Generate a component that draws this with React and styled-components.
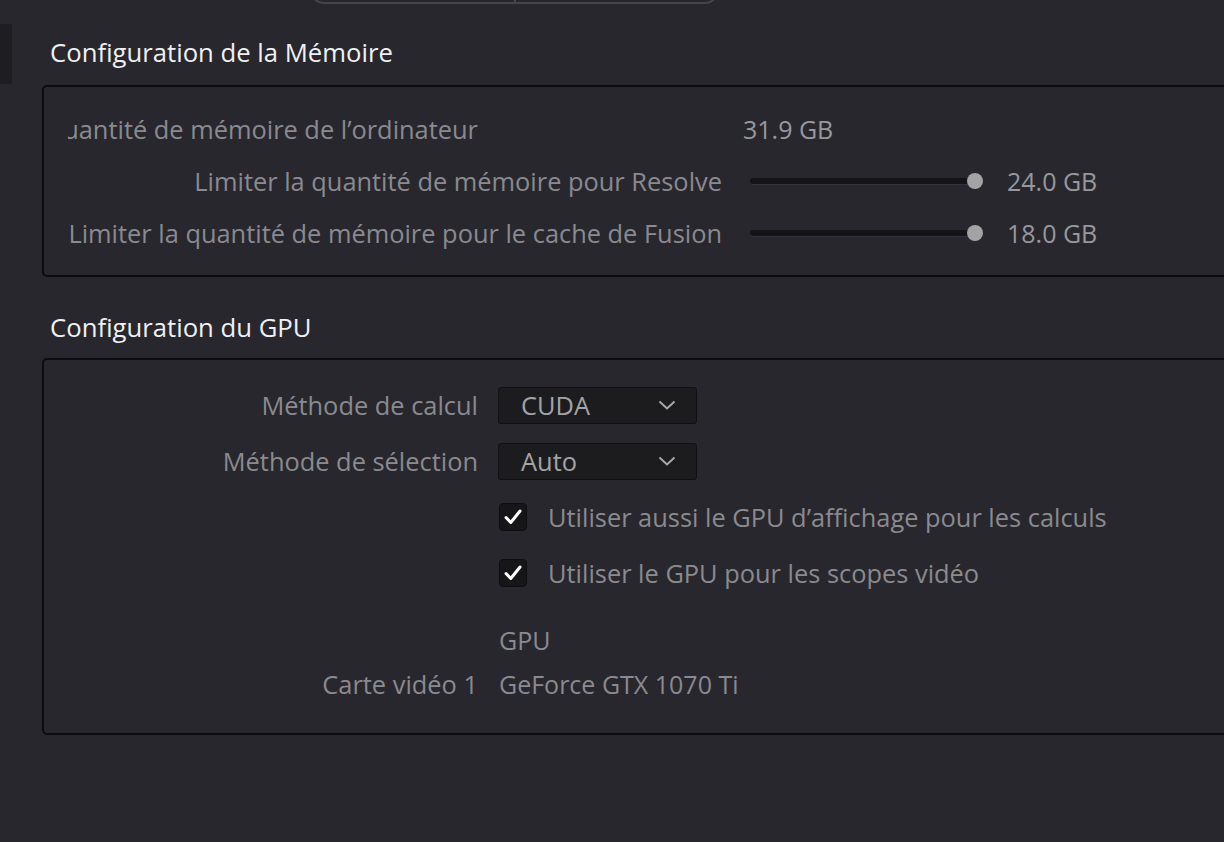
import React from 'react'
import styled, { createGlobalStyle } from 'styled-components'

const GlobalStyle = createGlobalStyle`
  html, body {
    margin: 0;
    padding: 0;
    background: #28272d;
    overflow: hidden;
  }
  body {
    font-family: "Open Sans", "Noto Sans", "DejaVu Sans", sans-serif;
  }
`;

const Page = styled.div`
    position: relative;
    width: 1224px;
    height: 842px;
    overflow: hidden;
    background: #28272d;
`;

const TopTabs = styled.div`
    display: flex;
    margin-left: 310px;
    margin-top: -28px;
    width: 405px;
    height: 28px;
    border: 2px solid #45444c;
    border-radius: 0 0 14px 14px;
`;

const TopTab = styled.div`
    flex: 1;
    & + & {
        border-left: 2px solid #45444c;
    }
`;

const Layout = styled.div`
    display: flex;
`;

const SideTab = styled.div`
    flex: none;
    width: 12px;
    height: 60px;
    margin-top: 20px;
    background: #1e1e22;
`;

const Content = styled.div`
    flex: none;
    width: 1220px;
    margin-left: 30px;
    padding-top: 33px;
`;

const Heading = styled.h2`
    margin: 0 0 16px 8px;
    font-size: 25.7px;
    line-height: 32px;
    font-weight: 400;
    color: #f0f0f2;
    & ~ & {
        margin-top: 35px;
        margin-bottom: 14px;
    }
`;

const Panel = styled.div`
    border: 2px solid #0c0c0e;
    border-radius: 5px;
    padding: ${p => p.$pad || '16px 0 16px 22px'};
`;

const Row = styled.div`
    display: flex;
    align-items: center;
    height: ${p => p.$h || 52}px;
    font-size: 25.4px;
    color: #8a8a8f;
    white-space: nowrap;
`;

const Label = styled.div`
    flex: none;
    margin-left: ${p => p.$clip || 0}px;
    width: ${p => (p.$w || 412) - (p.$clip || 0)}px;
    display: flex;
    justify-content: flex-end;
    overflow: hidden;
`;

const Value = styled.div`
    margin-left: ${p => p.$gap || 21}px;
    font-size: 25px;
    color: ${p => p.$light ? '#98989c' : '#8a8a8f'};
`;

const Slider = styled.div`
    position: relative;
    flex: none;
    margin-left: 28px;
    width: 233px;
    height: 16px;
    display: flex;
    align-items: center;
`;

const Track = styled.div`
    width: 225px;
    height: 6px;
    border-radius: 3px;
    background: #141416;
    box-shadow: 0 1px 0 #34333b;
`;

const Thumb = styled.div`
    position: absolute;
    left: 217px;
    top: 0;
    width: 16px;
    height: 16px;
    border-radius: 50%;
    background: #a3a3a6;
`;

const Select = styled.div`
    flex: none;
    margin-left: 20px;
    width: 199px;
    height: 37px;
    box-sizing: border-box;
    display: flex;
    align-items: center;
    justify-content: space-between;
    padding: 0 20px 0 22px;
    background: #1c1c1f;
    border: 1px solid #111113;
    border-radius: 3px;
    color: #a3a3a6;
`;

const Check = styled.div`
    flex: none;
    margin-left: 21px;
    width: 28px;
    height: 28px;
    box-sizing: border-box;
    border-radius: 4px;
    background: #161618;
    border: 1px solid #0e0e10;
    display: flex;
    align-items: center;
    justify-content: center;
`;

const CheckText = styled.span`
    margin-left: 21px;
`;

const Spacer = styled.div`
    height: ${p => p.$h}px;
`;

function Chevron() {
    return (
        <svg width="18" height="10" viewBox="0 0 18 10">
            <path d="M1.5 1.5 L9 8.5 L16.5 1.5" fill="none" stroke="#a8a8ab" strokeWidth="2" />
        </svg>
    );
}

function Tick() {
    return (
        <svg width="18" height="16" viewBox="0 0 18 16">
            <path d="M2 8.5 L6.8 13.5 L16 2" fill="none" stroke="#ffffff" strokeWidth="3" strokeLinecap="round" strokeLinejoin="round" />
        </svg>
    );
}

export default function App() {
    return (
        <Page>
            <GlobalStyle />
            <TopTabs>
                <TopTab />
                <TopTab />
            </TopTabs>
            <Layout>
                <SideTab />
                <Content>
                    <Heading>Configuration de la Mémoire</Heading>
                    <Panel>
                        <Row>
                            <Label $clip={2}>Quantité de mémoire de l’ordinateur</Label>
                            <Value $gap={265} $light>31.9 GB</Value>
                        </Row>
                        <Row>
                            <Label $w={656}>Limiter la quantité de mémoire pour Resolve</Label>
                            <Slider><Track /><Thumb /></Slider>
                            <Value $gap={24} $light>24.0 GB</Value>
                        </Row>
                        <Row>
                            <Label $w={656}>Limiter la quantité de mémoire pour le cache de Fusion</Label>
                            <Slider><Track /><Thumb /></Slider>
                            <Value $gap={24} $light>18.0 GB</Value>
                        </Row>
                    </Panel>

                    <Heading>Configuration du GPU</Heading>
                    <Panel $pad="17px 0 27px 22px">
                        <Row $h={56}>
                            <Label>Méthode de calcul</Label>
                            <Select><span>CUDA</span><Chevron /></Select>
                        </Row>
                        <Row $h={56}>
                            <Label>Méthode de sélection</Label>
                            <Select><span>Auto</span><Chevron /></Select>
                        </Row>
                        <Row $h={56}>
                            <Label />
                            <Check><Tick /></Check>
                            <CheckText>Utiliser aussi le GPU d’affichage pour les calculs</CheckText>
                        </Row>
                        <Row $h={56}>
                            <Label />
                            <Check><Tick /></Check>
                            <CheckText>Utiliser le GPU pour les scopes vidéo</CheckText>
                        </Row>
                        <Spacer $h={17} />
                        <Row $h={44}>
                            <Label />
                            <Value>GPU</Value>
                        </Row>
                        <Row $h={44}>
                            <Label>Carte vidéo 1</Label>
                            <Value>GeForce GTX 1070 Ti</Value>
                        </Row>
                    </Panel>
                </Content>
            </Layout>
        </Page>
    )
}
